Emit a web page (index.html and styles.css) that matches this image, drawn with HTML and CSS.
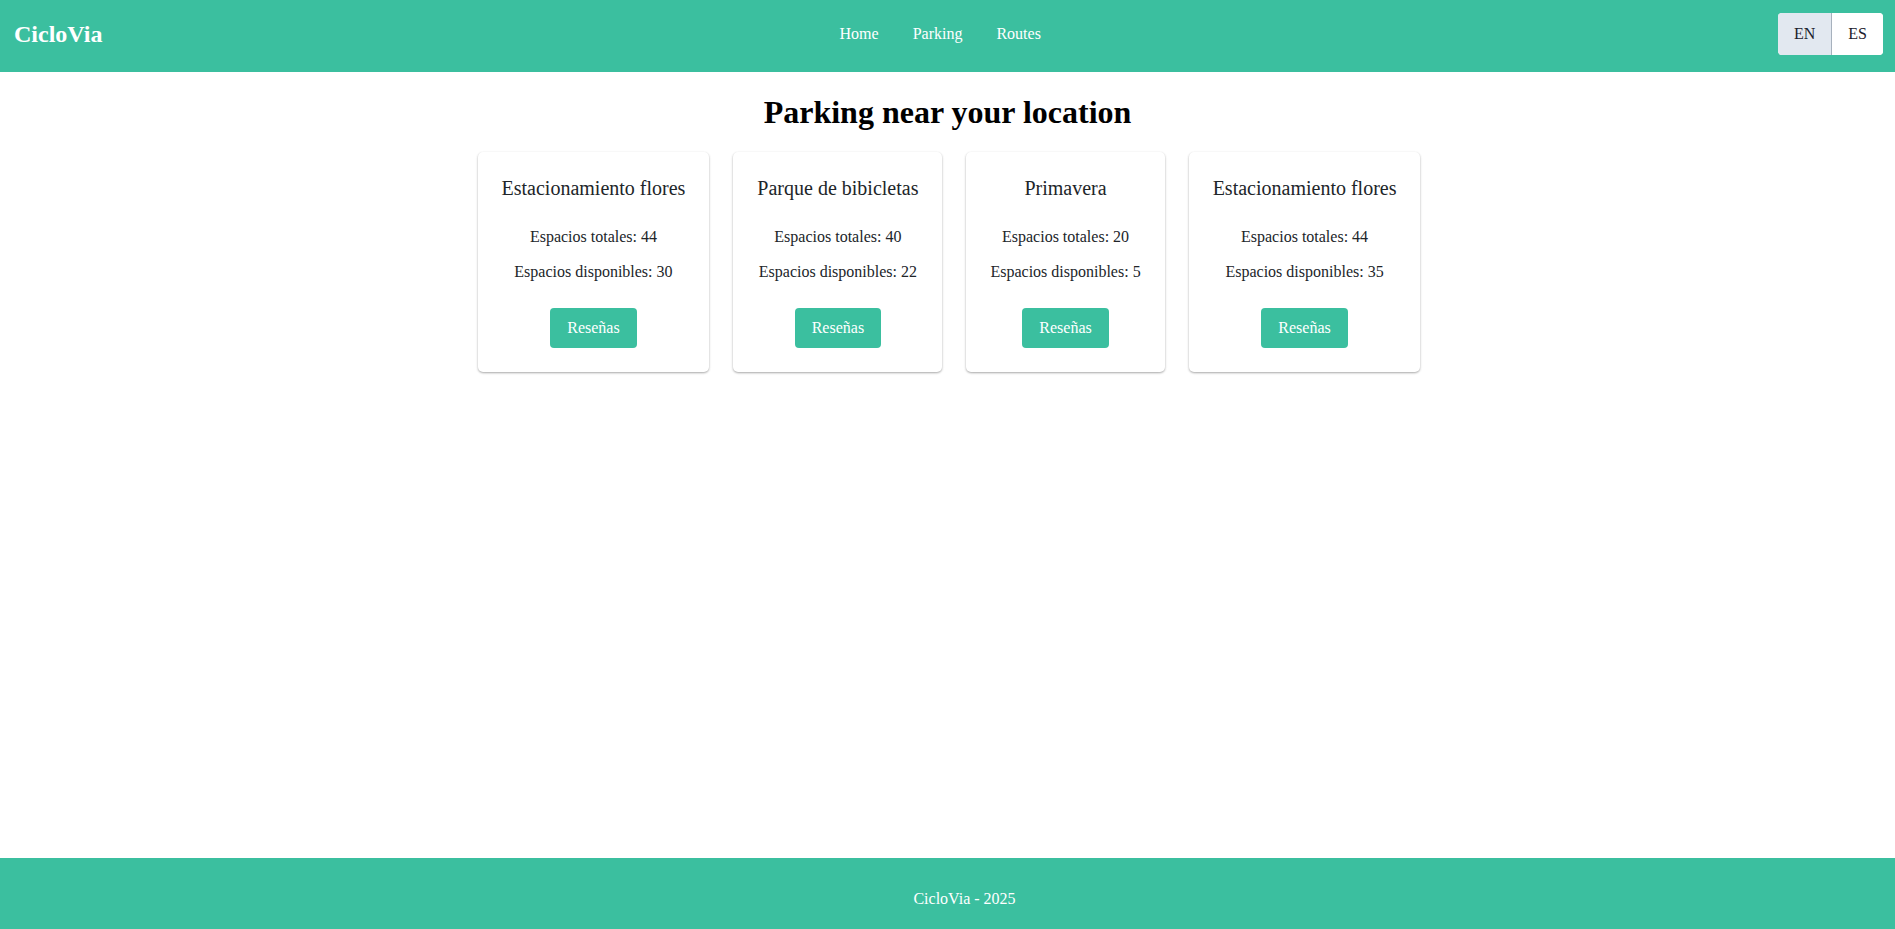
FILE: index.html
```html
<!DOCTYPE html>
<html lang="es">
<head>
<meta charset="utf-8">
<title>CicloVia</title>
<link rel="stylesheet" href="styles.css">
</head>
<body>
<header class="topbar">
  <div class="brand">CicloVia</div>
  <nav class="nav">
    <a href="#">Home</a>
    <a href="#">Parking</a>
    <a href="#">Routes</a>
  </nav>
  <div class="lang">
    <button class="lang-btn active">EN</button>
    <button class="lang-btn">ES</button>
  </div>
</header>
<main class="main">
  <h1 class="title">Parking near your location</h1>
  <div class="cards">
    <div class="card">
      <h3 class="card-title">Estacionamiento flores</h3>
      <p class="card-text">Espacios totales: 44</p>
      <p class="card-text">Espacios disponibles: 30</p>
      <div class="card-action"><button class="btn">Reseñas</button></div>
    </div>
    <div class="card">
      <h3 class="card-title">Parque de bibicletas</h3>
      <p class="card-text">Espacios totales: 40</p>
      <p class="card-text">Espacios disponibles: 22</p>
      <div class="card-action"><button class="btn">Reseñas</button></div>
    </div>
    <div class="card">
      <h3 class="card-title">Primavera</h3>
      <p class="card-text">Espacios totales: 20</p>
      <p class="card-text">Espacios disponibles: 5</p>
      <div class="card-action"><button class="btn">Reseñas</button></div>
    </div>
    <div class="card">
      <h3 class="card-title">Estacionamiento flores</h3>
      <p class="card-text">Espacios totales: 44</p>
      <p class="card-text">Espacios disponibles: 35</p>
      <div class="card-action"><button class="btn">Reseñas</button></div>
    </div>
  </div>
</main>
<footer class="footer"><span class="footer-text">CicloVia - 2025</span></footer>
</body>
</html>
```

FILE: styles.css
```css
* { box-sizing: border-box; }
html, body { margin: 0; padding: 0; }
body {
  font-family: "Liberation Serif", "Times New Roman", serif;
  font-size: 16px;
  color: #000;
  background: #fff;
  min-height: 100vh;
  display: flex;
  flex-direction: column;
}
.topbar {
  height: 72px;
  background: #3bbf9f;
  display: flex;
  align-items: center;
  justify-content: space-between;
  padding: 0 12px 4px 14px;
}
.brand {
  color: #fff;
  font-weight: bold;
  font-size: 24px;
}
.nav {
  display: flex;
  gap: 34px;
}
.nav a {
  color: #fff;
  text-decoration: none;
  font-size: 16px;
}
.lang {
  display: flex;
  background: #fff;
  border-radius: 4px;
  overflow: hidden;
}
.lang-btn {
  font-family: inherit;
  font-size: 16px;
  line-height: 18px;
  color: #1a202c;
  background: #fff;
  border: none;
  padding: 12px 16px;
  margin: 0;
  cursor: pointer;
}
.lang-btn.active {
  background: #e2e8f0;
  border-right: 1px solid #a7b1bd;
}
.main {
  flex: 1;
  display: flex;
  flex-direction: column;
  align-items: center;
}
.title {
  font-size: 32px;
  font-weight: bold;
  margin: 22px 0 21px;
  line-height: 37px;
}
.cards {
  display: flex;
  gap: 24px;
  align-items: flex-start;
  padding-left: 3px;
}
.card {
  background: #fff;
  border-radius: 5px;
  padding: 24px;
  text-align: center;
  box-shadow: 0 1px 3px rgba(0,0,0,0.12), 0 1px 2px rgba(0,0,0,0.24);
  color: #212529;
}
.card-title {
  font-size: 20px;
  font-weight: normal;
  line-height: 23px;
  margin: 1px 0 27px;
  white-space: nowrap;
}
.card-text {
  margin: 0 0 16px;
  line-height: 19px;
  white-space: nowrap;
}
.card-text + .card-text { margin-bottom: 0; }
.card-action {
  margin-top: 27px;
}
.btn {
  font-family: inherit;
  font-size: 16px;
  line-height: 20px;
  color: #fff;
  background: #3bbf9f;
  border: none;
  border-radius: 4px;
  padding: 10px 17px;
  cursor: pointer;
}
.footer {
  height: 71px;
  background: #3bbf9f;
  color: #fff;
  display: flex;
  justify-content: center;
  padding: 32px 0 0 34px;
  line-height: 18px;
  font-size: 16px;
}
.footer-text { display: block; }
```
